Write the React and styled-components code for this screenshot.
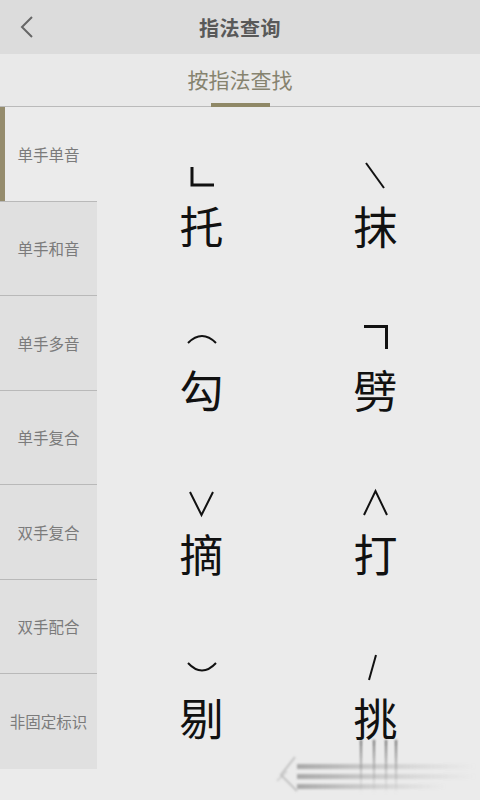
// Libraries
import styled, { createGlobalStyle } from 'styled-components';

// Global
const GlobalStyle = createGlobalStyle`
    html, body {
        margin: 0;
        padding: 0;
        background: #ebebeb;
    }
    body {
        font-family: "Noto Sans CJK SC", "Noto Sans", sans-serif;
    }
`;

// Styled Components
const Page = styled.div`
    position: relative;
    width: 480px;
    height: 800px;
    overflow: hidden;
    display: flex;
    flex-direction: column;
    background: #ebebeb;
`;

const Header = styled.header`
    height: 54px;
    flex-shrink: 0;
    display: flex;
    align-items: center;
    justify-content: center;
    position: relative;
    background: #dcdcdc;
`;

const BackButton = styled.button`
    position: absolute;
    left: 14px;
    top: 12px;
    width: 26px;
    height: 30px;
    padding: 0;
    border: none;
    background: none;
    display: flex;
    align-items: center;
    justify-content: center;
`;

const Title = styled.h1`
    margin: 0;
    font-size: 20px;
    font-weight: 700;
    color: #595959;
    letter-spacing: 0.5px;
`;

const TabBar = styled.div`
    height: 53px;
    flex-shrink: 0;
    display: flex;
    justify-content: center;
    background: #e9e9e9;
    border-bottom: 1px solid #bababa;
    box-sizing: border-box;
`;

const Tab = styled.div`
    position: relative;
    display: flex;
    align-items: center;
    font-size: 21px;
    color: ${p => (p.$active ? '#86836f' : '#999')};
    padding-bottom: 2px;

    &::after {
        content: '';
        display: ${p => (p.$active ? 'block' : 'none')};
        position: absolute;
        left: 50%;
        bottom: -1px;
        width: 59px;
        height: 4px;
        margin-left: -29px;
        background: #8f8866;
    }
`;

const Body = styled.div`
    flex: 1;
    display: flex;
    align-items: flex-start;
`;

const Sidebar = styled.nav`
    width: 97px;
    flex-shrink: 0;
    display: flex;
    flex-direction: column;
`;

const SideItem = styled.div`
    height: 94.5px;
    box-sizing: border-box;
    display: flex;
    align-items: center;
    justify-content: center;
    font-size: 15.5px;
    color: #7b7b7b;
    white-space: nowrap;
    background: ${p => (p.$active ? '#ebebeb' : '#e0e0e0')};
    box-shadow: ${p => (p.$active ? 'inset 5px 0 0 #958c6d' : 'none')};
    border-bottom: ${p => (p.$last ? 'none' : '1px solid #b9b9b9')};
`;

const Grid = styled.div`
    flex: 1;
    display: grid;
    grid-template-columns: 174px 174px;
    justify-content: center;
    row-gap: 74px;
    padding-top: 54px;
`;

const Cell = styled.div`
    display: flex;
    flex-direction: column;
    align-items: center;
    gap: 10px;
`;

const Mark = styled.svg`
    width: 30px;
    height: 30px;
    overflow: visible;
    display: block;
`;

const Glyph = styled.div`
    height: 50px;
    line-height: 48px;
    font-size: 44px;
    font-weight: 400;
    color: #111;
    font-family: "Noto Sans CJK SC", sans-serif;
`;

const Watermark = styled.svg`
    position: absolute;
    left: 265px;
    top: 735px;
    width: 215px;
    height: 65px;
    pointer-events: none;
`;

const fingerings = [
    { char: '托', mark: 'M5 6 V24 H27', width: 3 },
    { char: '抹', mark: 'M5 2 L23 27', width: 2 },
    { char: '勾', mark: 'M1 18 Q15 4 29 18', width: 2 },
    { char: '劈', mark: 'M3 1.5 H25.5 V24', width: 3 },
    { char: '摘', mark: 'M3 3 L14.5 26 L26 3', width: 2 },
    { char: '打', mark: 'M3 26 L14.5 2 L26 26', width: 2 },
    { char: '剔', mark: 'M1 10 Q15 25 29 10', width: 2 },
    { char: '挑', mark: 'M15 2 L8 27', width: 2 },
];

const categories = ['单手单音', '单手和音', '单手多音', '单手复合', '双手复合', '双手配合', '非固定标识'];

const App = () => (
    <Page>
        <GlobalStyle />
        <Header>
            <BackButton aria-label="返回">
                <svg width="14" height="24" viewBox="0 0 14 24">
                    <path d="M12 2 L2 12 L12 22" fill="none" stroke="#666" strokeWidth="2" />
                </svg>
            </BackButton>
            <Title>指法查询</Title>
        </Header>
        <TabBar>
            <Tab $active>按指法查找</Tab>
        </TabBar>
        <Body>
            <Sidebar>
                {categories.map((name, i) => (
                    <SideItem key={name} $active={i === 0} $last={i === categories.length - 1}>
                        {name}
                    </SideItem>
                ))}
            </Sidebar>
            <Grid>
                {fingerings.map(f => (
                    <Cell key={f.char}>
                        <Mark viewBox="0 0 30 30">
                            <path d={f.mark} fill="none" stroke="#111" strokeWidth={f.width} />
                        </Mark>
                        <Glyph>{f.char}</Glyph>
                    </Cell>
                ))}
            </Grid>
        </Body>
        {/* faint motion-blur watermark in the corner */}
        <Watermark viewBox="0 0 215 65">
            <defs>
                <linearGradient id="wmH" x1="0" x2="1" y1="0" y2="0">
                    <stop offset="0" stopColor="#666" stopOpacity="0.5" />
                    <stop offset="1" stopColor="#999" stopOpacity="0" />
                </linearGradient>
                <linearGradient id="wmV" x1="0" x2="0" y1="0" y2="1">
                    <stop offset="0" stopColor="#333" stopOpacity="0.7" />
                    <stop offset="1" stopColor="#999" stopOpacity="0" />
                </linearGradient>
                <filter id="wmBlur">
                    <feGaussianBlur stdDeviation="1.2" />
                </filter>
            </defs>
            <g filter="url(#wmBlur)">
                <rect x="95" y="5" width="2" height="55" fill="url(#wmV)" />
                <rect x="108" y="5" width="2" height="55" fill="url(#wmV)" />
                <rect x="120" y="5" width="2" height="55" fill="url(#wmV)" />
                <rect x="130" y="5" width="2" height="55" fill="url(#wmV)" />
                <rect x="32" y="29" width="180" height="5" fill="url(#wmH)" />
                <rect x="32" y="39" width="180" height="5" fill="url(#wmH)" />
                <rect x="32" y="49" width="150" height="5" fill="url(#wmH)" />
                <path d="M30 22 L16 40 L32 56" fill="none" stroke="#999" strokeOpacity="0.5" strokeWidth="2" />
                <path d="M22 36 L12 46" fill="none" stroke="#bbb" strokeOpacity="0.5" strokeWidth="2" />
            </g>
        </Watermark>
    </Page>
);

export default App;
